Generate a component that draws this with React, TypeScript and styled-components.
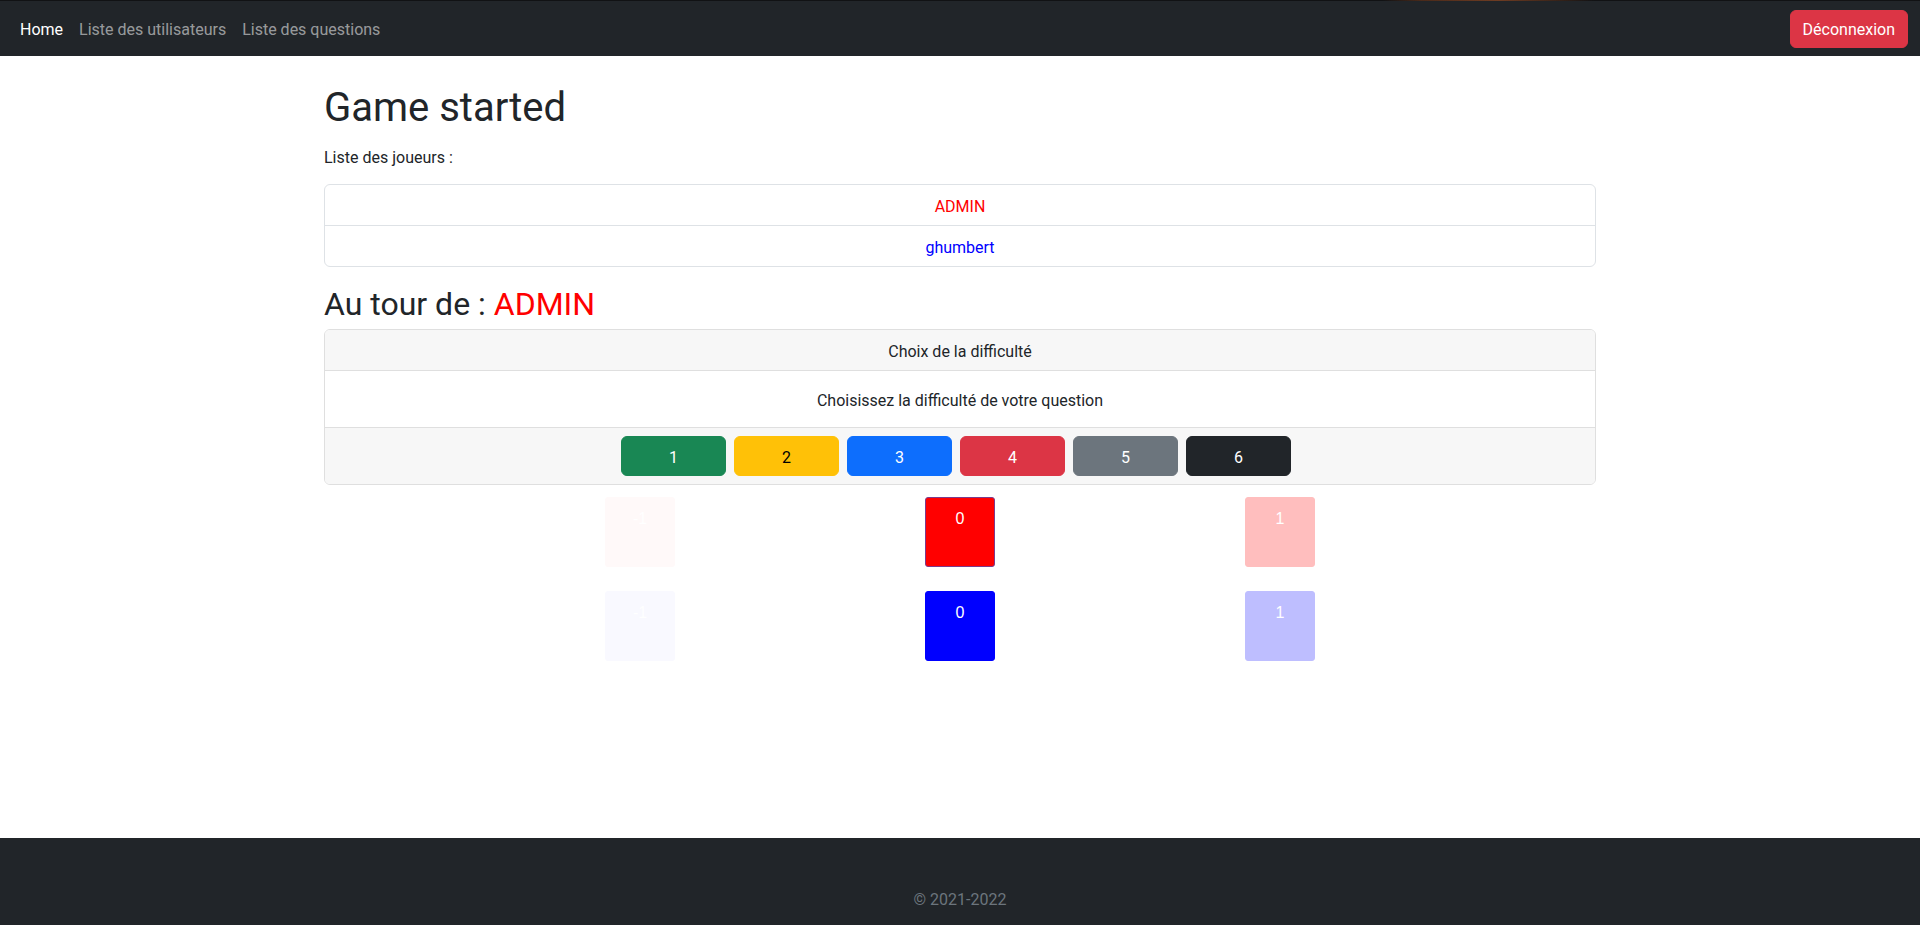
import React from "react";
import styled, { createGlobalStyle } from "styled-components";

const GlobalStyle = createGlobalStyle`
  *, *::before, *::after { box-sizing: border-box; }
  body {
    margin: 0;
    font-family: Roboto, "Noto Sans", sans-serif;
    font-size: 16px;
    line-height: 1.5;
    color: #212529;
    background: #ffffff;
  }
`;

const Navbar = styled.nav`
  display: flex;
  align-items: center;
  justify-content: space-between;
  background: #212529;
  border-top: 1px solid #111214;
  border-image: linear-gradient(
      to right,
      #111214 0%,
      #111214 72%,
      #4a2a1a 74%,
      #6e3c22 78%,
      #3a2419 81%,
      #111214 83%,
      #111214 100%
    )
    1;
  padding: 8px 12px 7px 12px;
`;

const NavList = styled.div`
  display: flex;
  align-items: center;
  height: 40px;
`;

const NavLink = styled.a<{ $active?: boolean }>`
  display: block;
  padding: 9px 8px 7px 8px;
  color: ${(p) => (p.$active ? "#ffffff" : "rgba(255, 255, 255, 0.55)")};
  text-decoration: none;
  cursor: pointer;
`;

const LogoutButton = styled.button`
  font-family: inherit;
  font-size: 16px;
  line-height: 24px;
  padding: 7px 12px 5px 12px;
  color: #ffffff;
  background: #dc3545;
  border: 1px solid #dc3545;
  border-radius: 6px;
  cursor: pointer;
`;

const Main = styled.main`
  min-height: 782px;
  padding-top: 28px;
`;

const Container = styled.div`
  width: 1272px;
  margin: 0 auto;
`;

const Title = styled.h1`
  font-size: 40px;
  font-weight: 400;
  line-height: 1.2;
  margin: 0 0 12px 0;
`;

const Paragraph = styled.p`
  margin: 0 0 14px 0;
  padding-top: 2px;
`;

const ListGroup = styled.ul`
  list-style: none;
  margin: 0 0 16px 0;
  padding: 0;
  border: 1px solid #dee2e6;
  border-radius: 6px;
`;

const ListItem = styled.li<{ $color: string }>`
  padding: 10px 16px 6px 16px;
  text-align: center;
  color: ${(p) => p.$color};
  & + & {
    border-top: 1px solid #dee2e6;
  }
`;

const TurnTitle = styled.h2`
  font-size: 32px;
  font-weight: 400;
  line-height: 1.2;
  margin: 0 0 6px 0;
  padding-top: 2px;
`;

const PlayerName = styled.span`
  color: #ff0000;
`;

const Card = styled.div`
  border: 1px solid #dfdfdf;
  border-radius: 6px;
  overflow: hidden;
`;

const CardHeader = styled.div`
  background: #f7f7f7;
  padding: 10px 16px 6px 16px;
  text-align: center;
  border-bottom: 1px solid #dfdfdf;
`;

const CardBody = styled.div`
  padding: 18px 16px 14px 16px;
  text-align: center;
`;

const CardFooter = styled.div`
  display: flex;
  justify-content: center;
  background: #f7f7f7;
  padding: 8px 16px;
  border-top: 1px solid #dfdfdf;
`;

const LevelButton = styled.button<{ $bg: string; $fg: string }>`
  width: 105px;
  height: 40px;
  margin-right: 8px;
  padding: 4px 0 0 0;
  font-family: inherit;
  font-size: 16px;
  line-height: 24px;
  color: ${(p) => p.$fg};
  background: ${(p) => p.$bg};
  border: 1px solid ${(p) => p.$bg};
  border-radius: 6px;
  cursor: pointer;
`;

const Board = styled.div`
  width: 960px;
  margin: 0 auto;
`;

const BoardRow = styled.div`
  display: grid;
  grid-template-columns: repeat(3, 320px);
  padding: 12px 0;
`;

const Cell = styled.div`
  display: flex;
  justify-content: center;
`;

const Square = styled.div<{ $color: string; $fade: number; $border?: string }>`
  width: 70px;
  height: 70px;
  padding-top: 9px;
  text-align: center;
  font-family: "Liberation Sans", Arial, sans-serif;
  font-size: 16px;
  line-height: 24px;
  color: #ffffff;
  background: ${(p) => p.$color};
  border: 1px solid ${(p) => p.$border ?? p.$color};
  border-radius: 3px;
  opacity: ${(p) => p.$fade};
`;

const Footer = styled.footer`
  background: #212529;
  padding: 50px 0;
  text-align: center;
  color: #6c757d;
`;

const levels = [
  { n: 1, bg: "#198754", fg: "#ffffff" },
  { n: 2, bg: "#ffc107", fg: "#000000" },
  { n: 3, bg: "#0d6efd", fg: "#ffffff" },
  { n: 4, bg: "#dc3545", fg: "#ffffff" },
  { n: 5, bg: "#6c757d", fg: "#ffffff" },
  { n: 6, bg: "#212529", fg: "#ffffff" },
];

const players = [
  { name: "ADMIN", color: "#ff0000", border: "#7b3a8c" },
  { name: "ghumbert", color: "#0000ff", border: "#0000ff" },
];

export default function App() {
  return (
    <>
      <GlobalStyle />
      <Navbar>
        <NavList>
          <NavLink $active>Home</NavLink>
          <NavLink>Liste des utilisateurs</NavLink>
          <NavLink>Liste des questions</NavLink>
        </NavList>
        <LogoutButton>Déconnexion</LogoutButton>
      </Navbar>
      <Main>
        <Container>
          <Title>Game started</Title>
          <Paragraph>Liste des joueurs :</Paragraph>
          <ListGroup>
            {players.map((p) => (
              <ListItem key={p.name} $color={p.color}>
                {p.name}
              </ListItem>
            ))}
          </ListGroup>
          <TurnTitle>
            Au tour de : <PlayerName>ADMIN</PlayerName>
          </TurnTitle>
          <Card>
            <CardHeader>Choix de la difficulté</CardHeader>
            <CardBody>Choisissez la difficulté de votre question</CardBody>
            <CardFooter>
              {levels.map((l) => (
                <LevelButton key={l.n} $bg={l.bg} $fg={l.fg}>
                  {l.n}
                </LevelButton>
              ))}
            </CardFooter>
          </Card>
        </Container>
        <Board>
          {players.map((p) => (
            <BoardRow key={p.name}>
              <Cell>
                <Square $color={p.color} $fade={0.02}>
                  -1
                </Square>
              </Cell>
              <Cell>
                <Square $color={p.color} $fade={1} $border={p.border}>
                  0
                </Square>
              </Cell>
              <Cell>
                <Square $color={p.color} $fade={0.25}>
                  1
                </Square>
              </Cell>
            </BoardRow>
          ))}
        </Board>
      </Main>
      <Footer>© 2021-2022</Footer>
    </>
  );
}
